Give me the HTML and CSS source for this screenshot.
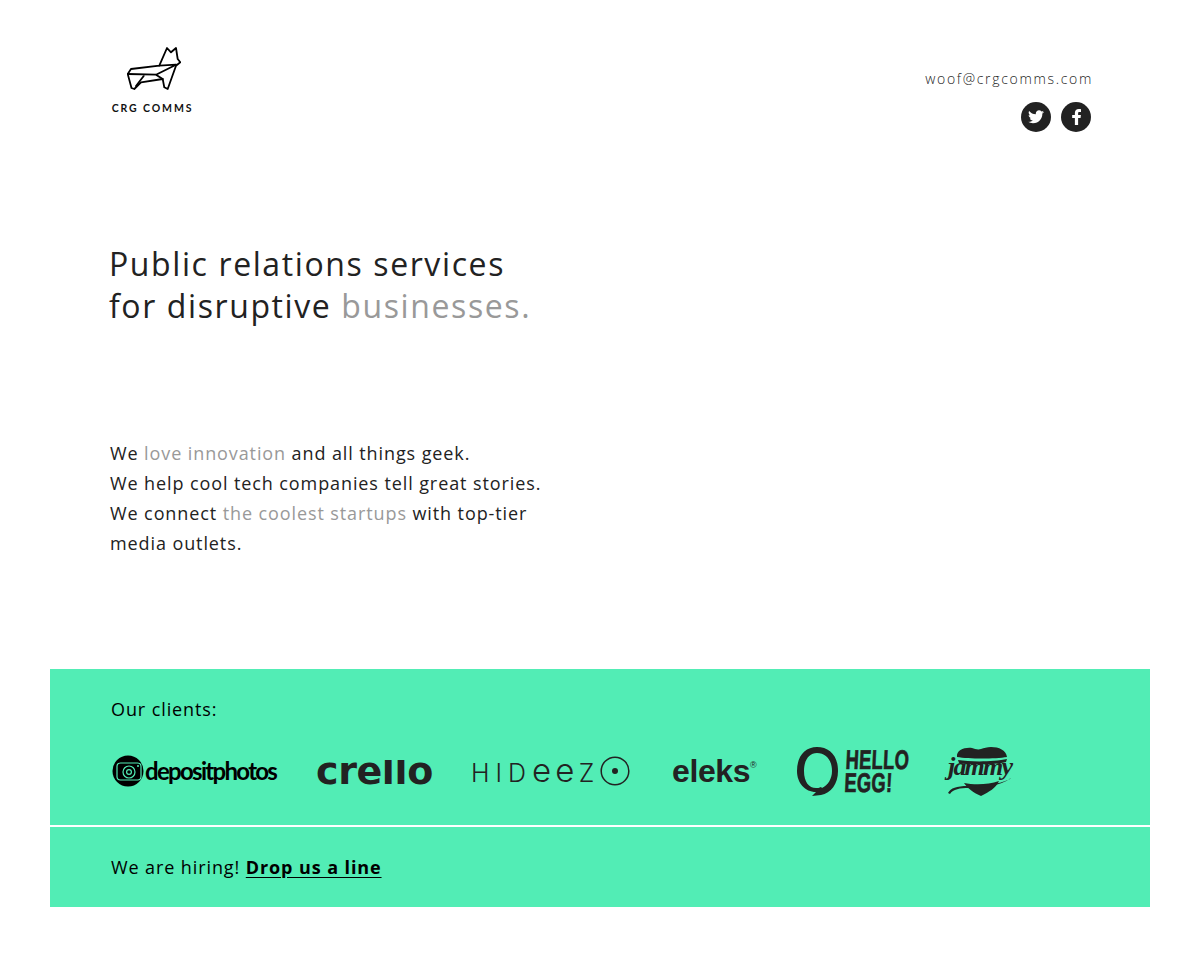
FILE: index.html
```html
<!DOCTYPE html>
<html lang="en">
<head>
<meta charset="utf-8">
<title>CRG Comms</title>
<link rel="stylesheet" href="styles.css">
</head>
<body>
<div class="page">
  <header class="top">
    <a class="brand" href="#">
      <svg class="dog" width="54" height="46" viewBox="-1 0 54 46" fill="none" stroke="#000" stroke-width="1.8" stroke-linejoin="round" stroke-linecap="round">
        <path d="M39 1 L43 5.300 L48 1 L49.700 12 L52.300 15.300 L48 18.700 L39.700 42 L36.300 40.300 L34.700 32 L13 35.300 L6.300 42 L3.500 41 L-.3 27 L3 22 L31.300 18.700 Z"/>
        <path d="M-.3 27 L28 27.700 L48 17.700 M28 27.700 L34.700 32 M15.700 29 L8 39 M31.300 18.700 L48 17.700"/>
      </svg>
      <span class="brand-name">CRG COMMS</span>
    </a>
    <div class="contact">
      <a class="mail" href="#">woof@crgcomms.com</a>
      <div class="social">
        <a class="soc" href="#" aria-label="Twitter">
          <svg width="16" height="14" viewBox="0 0 24 20"><path fill="#fff" d="M24 2.400c-.9.400-1.800.7-2.800.8 1-.6 1.800-1.600 2.200-2.700-1 .6-2 1-3.100 1.200C19.300.7 18 0 16.600 0c-2.700 0-4.900 2.200-4.900 4.900 0 .4 0 .8.100 1.100C7.700 5.800 4.100 3.900 1.700.9c-.4.700-.7 1.600-.7 2.500 0 1.700.9 3.200 2.200 4.100-.8 0-1.600-.2-2.200-.6v.1c0 2.400 1.700 4.400 3.900 4.800-.4.100-.8.200-1.300.2-.3 0-.6 0-.9-.1.600 2 2.400 3.400 4.600 3.400-1.700 1.300-3.800 2.100-6.100 2.100-.4 0-.8 0-1.200-.1C2.200 18.700 4.800 19.500 7.500 19.500c9.100 0 14-7.500 14-14v-.6c1-.7 1.800-1.600 2.500-2.500z"/></svg>
        </a>
        <a class="soc" href="#" aria-label="Facebook">
          <svg width="9" height="18" viewBox="0 0 10 18"><path fill="#fff" d="M6.800 18V10h2.700l.4-3.300H6.800V5c0-.9.300-1.500 1.600-1.500h1.600V.4C9.600.3 8.600.2 7.500.2 5 .2 3.200 1.800 3.200 4.600v2.100H.2V10h3v8z"/></svg>
        </a>
      </div>
    </div>
  </header>

  <h1 class="headline">Public relations services<br>for disruptive <span class="dim">businesses.</span></h1>

  <p class="intro">We <span class="dim">love innovation</span> and all things geek.<br>We help cool tech companies tell great stories.<br>We connect <span class="dim">the coolest startups</span> with top-tier<br>media outlets.</p>

  <section class="band clients">
    <p class="band-text">Our clients:</p>
    <div class="logos">
      <div class="logo dp">
        <svg width="32" height="32" viewBox="0 0 32 32">
          <circle cx="16" cy="16" r="15.500" fill="#000"/>
          <rect x="5" y="8" width="24" height="17" rx="3.500" fill="none" stroke="#52edb5" stroke-width="1.200"/>
          <circle cx="17" cy="17" r="6" fill="none" stroke="#52edb5" stroke-width="1.200"/>
          <circle cx="17" cy="17" r="3" fill="#52edb5"/>
          <circle cx="17" cy="17" r="1.800" fill="#000"/>
          <circle cx="26" cy="11" r="1" fill="#52edb5"/>
        </svg>
        <span class="dp-name">depositphotos</span>
      </div>
      <span class="logo crello">cre<span class="crello-l">l</span><span class="crello-l">l</span>o</span>
      <div class="logo hideez">
        <span class="hideez-name">HID<span class="hideez-e">ee</span>Z</span>
        <svg width="30" height="30" viewBox="0 0 30 30"><circle cx="15" cy="15" r="13.800" fill="none" stroke="#222" stroke-width="1.500"/><circle cx="15" cy="15" r="3" fill="#222"/></svg>
      </div>
      <span class="logo eleks">eleks<sup class="reg">®</sup></span>
      <div class="logo egg">
        <svg width="42" height="49" viewBox="0 0 42 49"><path fill="#222" fill-rule="evenodd" d="M20 0C32 0 41 8 41 24c0 13-7 22-17 24l-9 1 4-4C8 45 0 36 0 24 0 9 8 0 20 0zm0 6C12 6 7 13 7 24c0 11 5 17 12 17 2 0 3 0 5-1l1 1c6-3 10-9 10-17C35 13 29 6 20 6z"/></svg>
        <span class="egg-name">HELLO<br>EGG!</span>
      </div>
      <div class="logo jammy">
        <svg class="heart" width="68" height="49" viewBox="0 0 68 49" fill="#222">
          <path d="M11 10C10 3 19 0 26 1c3 1 6 2 9 1 3-1 6-2 10-2 8 0 15 3 16 10-12 2-38 2-50 0z"/>
          <path d="M12 13c12 2 36 2 49-1l-1 3c-12 3-36 3-47 1z"/>
          <path d="M18 36c10 2 24 2 35-2-3 7-10 11-18 15-7-3-14-8-17-13z"/>
          <path d="M2 46c3-5 8-7 20-7 12 0 30-1 42-7l1-1c-12 9-30 10-42 10-9 0-16 1-19 6z" />
        </svg>
        <span class="jammy-name">jammy</span>
      </div>
    </div>
  </section>
  <section class="band hiring">
    <p class="band-text">We are hiring! <a class="line-link" href="#">Drop us a line</a></p>
  </section>
</div>
</body>
</html>
```
FILE: styles.css
```css
* { box-sizing: border-box; }
html, body { margin: 0; padding: 0; background: #fff; }
body { font-family: "Open Sans", sans-serif; color: #222; }
a { color: inherit; text-decoration: none; }
.page { padding: 0 50px 50px; min-height: 957px; }

.top { display: flex; justify-content: space-between; align-items: flex-start; padding: 47px 57px 0 62px; height: 243px; }
.brand { display: flex; flex-direction: column; align-items: center; width: 81px; }
.dog { display: block; margin-left: 3px; }
.brand-name { font-family: "Lato", sans-serif; font-weight: 700; font-size: 10.5px; line-height: 12px; letter-spacing: 1.9px; color: #111; margin-top: 9px; white-space: nowrap; }
.contact { display: flex; flex-direction: column; align-items: flex-end; padding-top: 22px; }
.mail { font-size: 14px; font-weight: 300; line-height: 20px; letter-spacing: 1.68px; color: #222; }
.social { display: flex; gap: 10px; margin-top: 13px; margin-right: 2px; }
.soc { width: 30px; height: 30px; border-radius: 50%; background: #222; display: flex; align-items: center; justify-content: center; }

.headline { margin: 0 0 0 59px; font-size: 32px; font-weight: 400; line-height: 42px; letter-spacing: 1.6px; color: #222; }
.dim { color: #999; }
.intro { margin: 111px 0 0 60px; font-size: 18px; font-weight: 400; line-height: 30px; letter-spacing: .9px; color: #222; height: 231px; }

.band { background: #52edb5; color: #000; }
.band-text { margin: 0; font-size: 18px; font-weight: 400; line-height: 30px; letter-spacing: .9px; }
.clients { height: 156px; padding: 25px 60px 0 61px; }
.hiring { margin-top: 2px; height: 80px; padding: 25px 61px 0; }
.line-link { font-weight: 700; text-decoration: underline; text-underline-offset: 3px; }

.logos { display: flex; align-items: center; height: 50px; margin: 22px 0 0 1px; }
.logo { display: flex; align-items: center; color: #222; flex: none; }
.dp svg { display: block; margin-right: 1px; }
.dp { width: 204px; }
.dp-name { font-family: "Lato", sans-serif; font-size: 24px; font-weight: 700; letter-spacing: -1.7px; color: #000; line-height: 32px; }
.crello { width: 156px; font-family: "DejaVu Sans", sans-serif; font-weight: 700; font-size: 38px; letter-spacing: -.4px; line-height: 38px; }
.crello-l { display: inline-block; transform: scaleY(.82); transform-origin: 50% 80%; }
.hideez { width: 200px; }
.hideez-name { display: flex; align-items: baseline; font-family: "Inter", sans-serif; font-weight: 300; font-size: 25px; letter-spacing: 6px; line-height: 32px; margin: 0 0 0 -1px; color: #222; }
.hideez-e { font-size: 33px; letter-spacing: 4.2px; }
.eleks { width: 125px; font-family: "Liberation Sans", sans-serif; font-weight: 700; font-size: 32px; letter-spacing: -.4px; line-height: 36px; align-items: flex-start; }
.reg { font-size: 9px; line-height: 10px; margin: 7px 0 0 0; vertical-align: baseline; font-weight: 400; }
.egg { width: 149px; }
.egg svg { display: block; margin-right: 6px; flex: none; }
.egg-name { display: block; margin-top: 2px; font-family: "Liberation Sans", sans-serif; font-weight: 700; font-size: 27px; line-height: 23px; letter-spacing: .4px; transform: scaleX(.68) skewX(-4deg); transform-origin: 0 50%; -webkit-text-stroke: .7px #222; white-space: nowrap; }
.jammy { position: relative; width: 68px; height: 49px; }
.heart { display: block; }
.jammy-name { position: absolute; left: 2px; top: 6px; font-family: "Liberation Serif", serif; font-style: italic; font-weight: 700; font-size: 26px; line-height: 28px; letter-spacing: -1.8px; color: #222; }
```
